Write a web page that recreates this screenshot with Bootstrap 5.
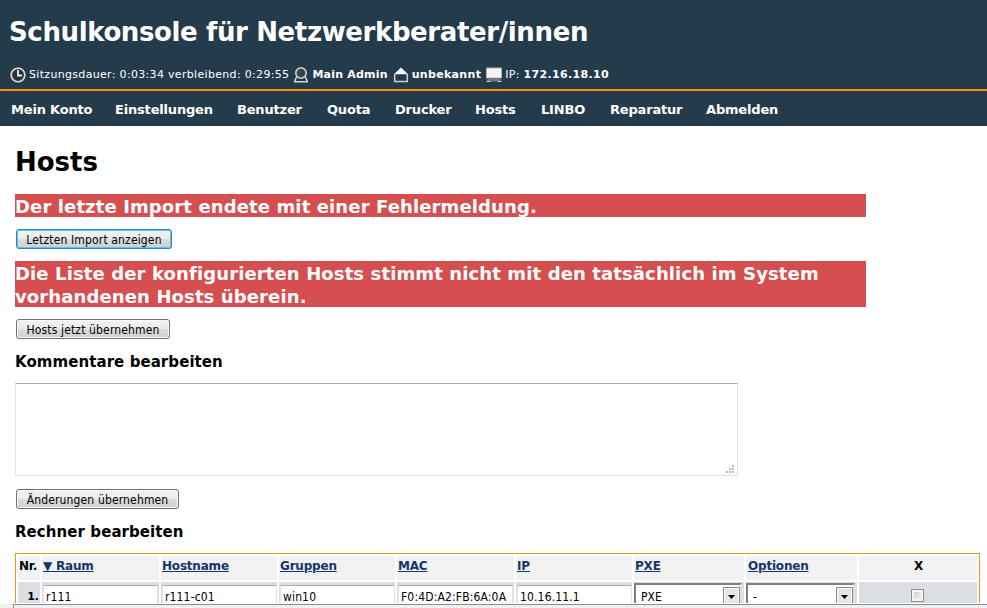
<!DOCTYPE html>
<html lang="de">
<head>
<meta charset="utf-8">
<title>Schulkonsole</title>
<link href="https://cdn.jsdelivr.net/npm/bootstrap@5.3.0/dist/css/bootstrap.min.css" rel="stylesheet">
<style>
body{font-family:"DejaVu Sans",Verdana,sans-serif;font-size:11px;color:#000;height:608px;line-height:16px}
.top-bar{background:#243b4b;height:89px;padding:15px 0 0 9px}
.top-bar h1{font-size:26px;line-height:34px;font-weight:700;white-space:nowrap;letter-spacing:-.38px}
.session{margin-top:17px;height:18px;white-space:nowrap;letter-spacing:.32px}
.session svg{flex:none}
.session .ico-gap{margin-left:4px}
.session .txt-gap{margin-left:2px}
.menu-bar{background:#243b4b;border-top:2px solid #ff8c00;height:37px;font-size:13px;font-weight:700;letter-spacing:-.18px}
.menu-bar a{color:#fff;padding:1px 0 0 11px;line-height:36px;white-space:nowrap}
.page{height:477px;padding:20px 0 0 15px}
.page h2{font-size:26px;line-height:32px;font-weight:700;margin:0 0 16px}
.notice{background:#d64f50;color:#fff;width:851px;height:23px;padding-top:1px;font-size:18px;font-weight:700;line-height:23px;letter-spacing:.12px}
.notice.two-line{height:46px}
.page h3{font-size:15px;font-weight:700;line-height:20px;margin:13px 0 11px;letter-spacing:.07px}
.btn-win{font-family:"DejaVu Sans Condensed","DejaVu Sans",Tahoma,sans-serif;font-stretch:condensed;font-size:12px;letter-spacing:.15px;line-height:16px;height:20px;padding:1px 0 0;border:1px solid #707070;border-radius:3px;color:#000;background:linear-gradient(#f2f2f2 0,#ebebeb 48%,#ddd 50%,#cfcfcf 100%);box-shadow:inset 0 0 0 1px #fafafa;display:block;margin:12px 0 12px 1px;white-space:nowrap}
.btn-win.active-ring{border-color:#3c7fb1;box-shadow:inset 0 0 0 1px #46d0f4}
.comment{width:723px;height:93px;border:1px solid #e2e3ea;border-top-color:#abadb3;border-radius:1px;resize:none;display:block}
.grip{right:3px;bottom:2px}
.hosts{width:965px;table-layout:fixed;border:1px solid #f3921e;border-collapse:separate;border-spacing:2px}
.hosts th{background:#f2f2f2;height:24px;padding:0 0 4px 1px;font-size:12px;line-height:16px;vertical-align:middle;white-space:nowrap;letter-spacing:-.2px}
.hosts th a{color:#14366b;text-decoration:underline}
.hosts td{background:#dbdfe3;height:30px;padding:3px 1px 0;vertical-align:top}
.cell-input{display:block;width:115px;height:24px;border:1px solid #e2e3ea;border-top-color:#abadb3;border-radius:1px;background:#fff;padding:0 2px 1px;font-family:"DejaVu Sans Condensed","DejaVu Sans",Tahoma,sans-serif;font-stretch:condensed;font-size:12px;line-height:20px;letter-spacing:.15px;color:#000}
.hosts td.pick{padding:1px 2px 0 0}
.win-select{height:26px;border:2px solid #808080;border-right-color:#ddd;background:#fff;padding:2px 0 0 5px;font-family:"DejaVu Sans Condensed","DejaVu Sans",sans-serif;font-stretch:condensed;font-size:12px;line-height:20px}
.arrow{width:17px;height:22px;border:1px solid #8a8a8a;background:#e6e6e6;box-shadow:inset 0 0 0 1px #f8f8f8}
.tick{width:13px;height:13px;border:1px solid #8e8f8f;background:linear-gradient(135deg,#c5c9cf,#f8f8f8);box-shadow:inset 0 0 0 2px #f4f4f4;margin:4px 53px 0 51px}
.status-strip{height:5px;background:#f0f0f0;border-top:1px solid #fff}
.status-strip div{height:4px;margin-left:13px;border-top:1px solid #8c8c8c;border-left:1px solid #8c8c8c}
</style>
<script src="https://cdn.jsdelivr.net/npm/bootstrap@5.3.0/dist/js/bootstrap.bundle.min.js"></script>
</head>
<body class="bg-white overflow-hidden d-flex flex-column">
<header class="top-bar text-white flex-shrink-0">
<h1 class="mb-0">Schulkonsole für Netzwerkberater/innen</h1>
<div class="session d-flex align-items-center">
<svg width="18" height="18" viewBox="0 0 18 18"><circle cx="9" cy="9" r="7.600" fill="#2a3338" stroke="#151515" stroke-width="1.500"/><circle cx="9" cy="9" r="6.900" fill="none" stroke="#d8d4d2" stroke-width="1.900"/><path d="M9 4v5.500h4" fill="none" stroke="#eee" stroke-width="1.800"/></svg>
<span class="txt-gap">Sitzungsdauer: 0:03:34 verbleibend: 0:29:55</span>
<svg class="ico-gap" width="16" height="18" viewBox="0 0 16 18"><path d="M4.300 10.500 2.700 12.500 1.700 15.800h12.600l-1-3.300-1.600-2" fill="none" stroke="#d8d4d2" stroke-width="1.500"/><circle cx="8" cy="7" r="5.200" fill="#344650" stroke="#c8c4c2" stroke-width="1.800"/></svg>
<b style="margin-left:3px;letter-spacing:.2px">Main Admin</b>
<svg style="margin-left:5px" width="16" height="18" viewBox="0 0 16 18"><path d="M1 8.200 8 1.500l7 6.700z" fill="#fff"/><path d="M1.700 8v7.500h12.600V8" fill="none" stroke="#d0cccb" stroke-width="1.500"/></svg>
<b style="margin-left:3px">unbekannt</b>
<svg class="ico-gap" width="18" height="18" viewBox="0 0 18 18"><path d="M1.500 2h15v10h-15z" fill="#f4f4f4" stroke="#b5b2b0"/><path d="M3 12.500h12l1.500 3h-15z" fill="#777"/><path d="M1.500 15.500h4m7 0h4" stroke="#ccc"/></svg>
<span class="txt-gap">IP: <b>172.16.18.10</b></span>
</div>
</header>
<nav class="menu-bar d-flex flex-shrink-0">
<a href="#" class="text-decoration-none" style="width:104px">Mein Konto</a><a href="#" class="text-decoration-none" style="width:122px">Einstellungen</a><a href="#" class="text-decoration-none" style="width:90px">Benutzer</a><a href="#" class="text-decoration-none" style="width:68px">Quota</a><a href="#" class="text-decoration-none" style="width:80px">Drucker</a><a href="#" class="text-decoration-none" style="width:66px">Hosts</a><a href="#" class="text-decoration-none" style="width:69px">LINBO</a><a href="#" class="text-decoration-none" style="width:96px">Reparatur</a><a href="#" class="text-decoration-none">Abmelden</a>
</nav>
<main class="page flex-shrink-0 overflow-hidden">
<h2>Hosts</h2>
<div class="notice">Der letzte Import endete mit einer Fehlermeldung.</div>
<button class="btn-win active-ring" style="width:156px">Letzten Import anzeigen</button>
<div class="notice two-line">Die Liste der konfigurierten Hosts stimmt nicht mit den tatsächlich im System<br>vorhandenen Hosts überein.</div>
<button class="btn-win" style="width:154px">Hosts jetzt übernehmen</button>
<h3>Kommentare bearbeiten</h3>
<div class="position-relative" style="width:723px"><textarea class="comment"></textarea><svg class="grip position-absolute" width="9" height="9" viewBox="0 0 9 9"><path d="M6 0h2v2H6zM3 3h2v2H3zM6 3h2v2H6zM0 6h2v2H0zM3 6h2v2H3zM6 6h2v2H6z" fill="#bbb"/></svg></div>
<button class="btn-win" style="width:163px;margin-top:13px">Änderungen übernehmen</button>
<h3>Rechner bearbeiten</h3>
<table class="hosts">
<colgroup><col style="width:22px"><col style="width:117px"><col style="width:116px"><col style="width:116px"><col style="width:117px"><col style="width:116px"><col style="width:110px"><col style="width:111px"><col style="width:118px"></colgroup>
<tr><th>Nr.</th><th><a href="#">▼ Raum</a></th><th><a href="#">Hostname</a></th><th><a href="#">Gruppen</a></th><th><a href="#">MAC</a></th><th><a href="#">IP</a></th><th><a href="#">PXE</a></th><th style="padding-left:2px"><a href="#">Optionen</a></th><th class="text-center">X</th></tr>
<tr><td class="text-end fw-bold" style="padding-top:7px">1.</td><td><input class="cell-input" value="r111"></td><td><input class="cell-input" value="r111-c01"></td><td><input class="cell-input" value="win10"></td><td><input class="cell-input" value="F0:4D:A2:FB:6A:0A"></td><td><input class="cell-input" value="10.16.11.1"></td>
<td class="pick"><div class="win-select d-flex justify-content-between">PXE<span class="arrow"><svg class="d-block mx-auto" width="7" height="18" viewBox="0 0 7 18"><path d="M0 7h7L3.500 11z"/></svg></span></div></td>
<td class="pick"><div class="win-select d-flex justify-content-between">-<span class="arrow"><svg class="d-block mx-auto" width="7" height="18" viewBox="0 0 7 18"><path d="M0 7h7L3.500 11z"/></svg></span></div></td>
<td><div class="tick"></div></td></tr>
</table>
</main>
<footer class="status-strip flex-shrink-0"><div></div></footer>
</body>
</html>
